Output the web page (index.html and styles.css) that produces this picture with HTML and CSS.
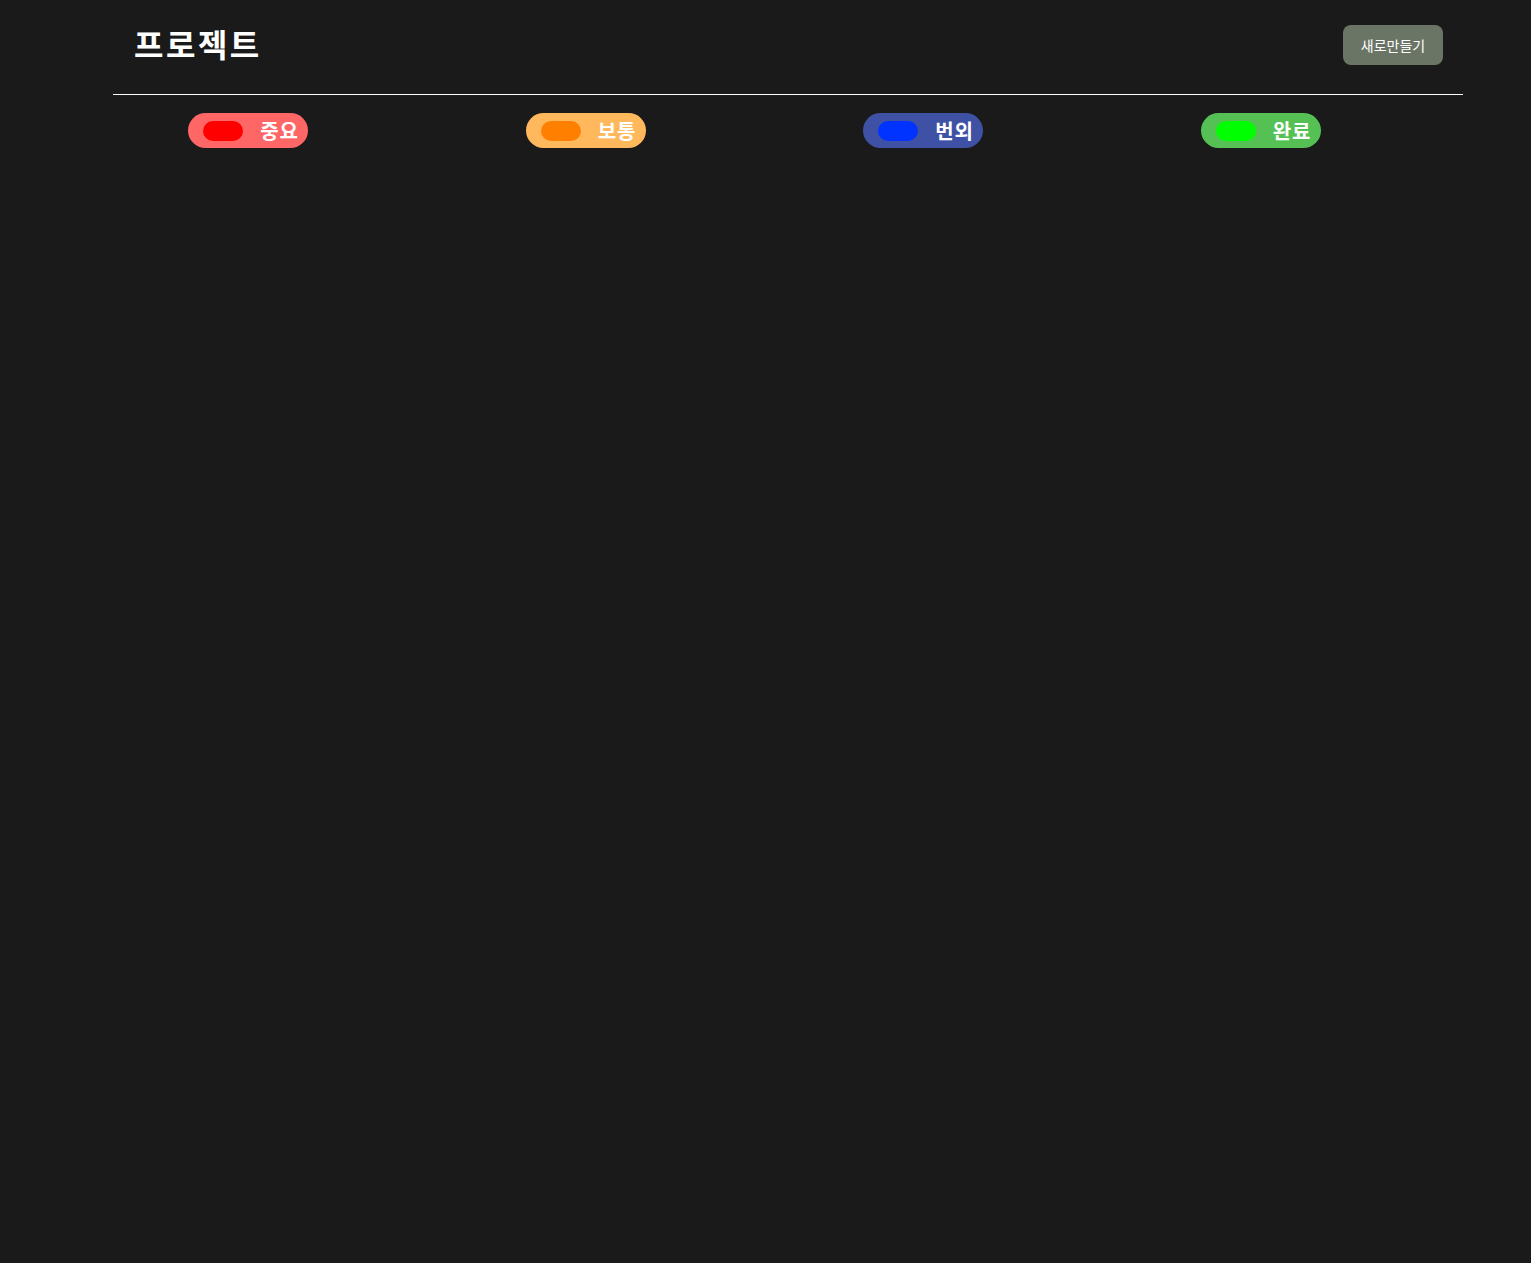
FILE: index.html
```html
<!DOCTYPE html>
<html lang="ko">
<head>
<meta charset="utf-8">
<title>프로젝트</title>
<link rel="stylesheet" href="styles.css">
</head>
<body>
<div class="page">
  <header class="header">
    <h1 class="title">프로젝트</h1>
    <button class="new-btn">새로만들기</button>
  </header>
  <div class="divider"></div>
  <div class="columns">
    <div class="col"><div class="pill pill-red"><span class="dot"></span><span class="label">중요</span></div></div>
    <div class="col"><div class="pill pill-orange"><span class="dot"></span><span class="label">보통</span></div></div>
    <div class="col"><div class="pill pill-blue"><span class="dot"></span><span class="label">번외</span></div></div>
    <div class="col"><div class="pill pill-green"><span class="dot"></span><span class="label">완료</span></div></div>
  </div>
</div>
</body>
</html>
```
FILE: styles.css
```css
html, body {
  margin: 0;
  padding: 0;
  background: #1a1a1a;
  min-height: 100%;
}
body {
  font-family: "Noto Sans CJK KR", "Noto Sans", sans-serif;
  color: #fff;
}
.page {
  padding: 0 68px 0 113px;
}
.header {
  display: flex;
  justify-content: space-between;
  align-items: center;
  padding: 25px 20px 29px 21px;
}
.title {
  margin: -4px 0 0;
  font-size: 32px;
  font-weight: 700;
  letter-spacing: 2.5px;
  line-height: 40px;
}
.new-btn {
  width: 100px;
  height: 40px;
  border: none;
  border-radius: 8px;
  background: #6b7566;
  color: #fff;
  font-family: inherit;
  font-size: 14px;
  padding: 0;
}
.divider {
  height: 1px;
  background: #ffffff;
}
.columns {
  display: grid;
  grid-template-columns: repeat(4, 1fr);
  margin-top: 18px;
}
.col {
  padding-left: 75px;
}
.pill {
  display: inline-flex;
  align-items: center;
  width: 120px;
  height: 35px;
  box-sizing: border-box;
  padding: 0 9px 0 15px;
  border-radius: 18px;
}
.dot {
  width: 40px;
  height: 20px;
  border-radius: 10px;
  flex: none;
}
.label {
  margin-left: auto;
  font-size: 20px;
  font-weight: 700;
  letter-spacing: 1px;
  line-height: 1;
}
.pill-red { background: #ff6666; }
.pill-red .dot { background: #ff0000; }
.pill-orange { background: #ffb95c; }
.pill-orange .dot { background: #ff8000; }
.pill-blue { background: #3f51a5; }
.pill-blue .dot { background: #0033ff; }
.pill-green { background: #55c155; }
.pill-green .dot { background: #00ff00; }
```
